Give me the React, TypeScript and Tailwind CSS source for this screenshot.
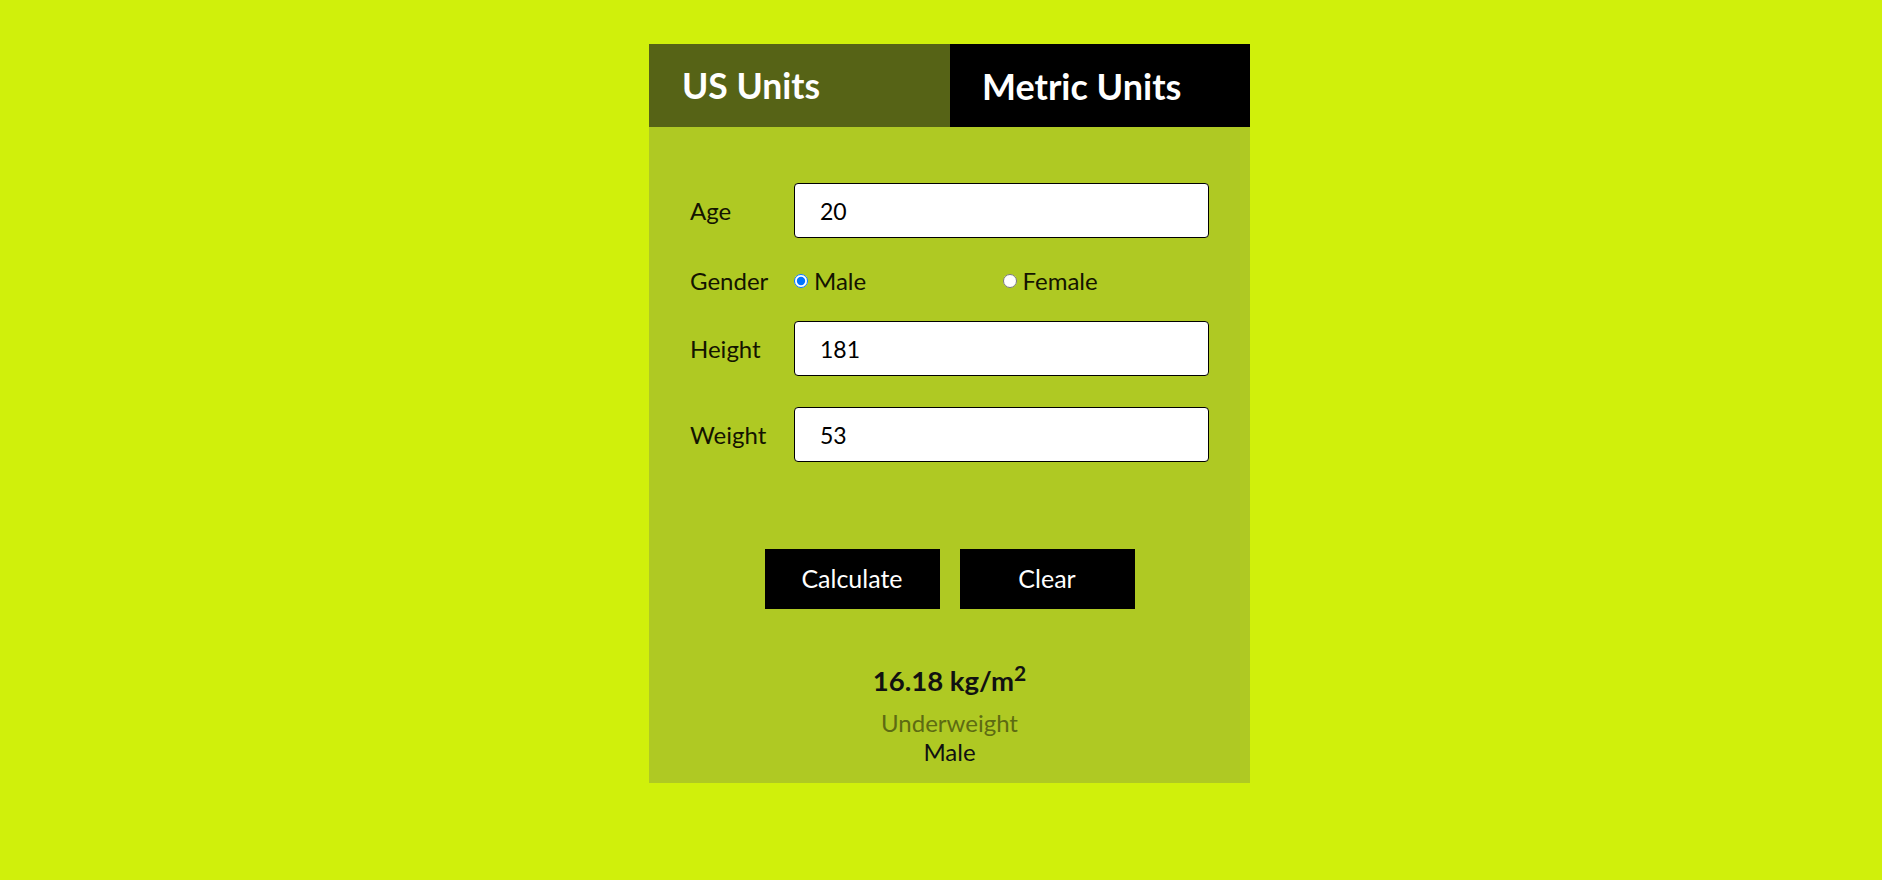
export default function App() {
  const inputCls =
    "h-[55px] w-[415px] rounded-[4px] border border-black bg-white pl-[25px] text-[23px] text-black outline-none";

  return (
    <div className="min-h-screen w-full bg-[#d0f00b] pt-[44px] font-['Lato',sans-serif]">
      <div className="ml-[649px] w-[601px] bg-[#afc923]">
        {/* unit tabs */}
        <div className="flex h-[83px]">
          <div className="flex w-[301px] items-center bg-[#566316] pl-[33px] text-[35.5px] font-bold text-white">
            US Units
          </div>
          <div className="flex flex-1 items-center bg-black pl-[32px] text-[36px] font-bold text-white">
            Metric Units
          </div>
        </div>

        {/* form */}
        <div className="px-[41px] pt-[56px] text-[24px] text-[#141400]">
          <div className="flex items-center">
            <label className="w-[104px]">Age</label>
            <input defaultValue="20" className={inputCls} />
          </div>

          <div className="mt-[28px] flex h-[30px] items-center">
            <span className="w-[104px]">Gender</span>
            <div className="grid w-[415px] grid-cols-2">
              <label className="flex items-center">
                <input type="radio" name="gender" defaultChecked className="m-0 mr-[6px] h-[14px] w-[14px]" />
                Male
              </label>
              <label className="flex items-center">
                <input type="radio" name="gender" className="m-0 ml-[1px] mr-[6px] h-[14px] w-[14px]" />
                Female
              </label>
            </div>
          </div>

          <div className="mt-[25px] flex items-center">
            <label className="w-[104px]">Height</label>
            <input defaultValue="181" className={inputCls} />
          </div>

          <div className="mt-[31px] flex items-center">
            <label className="w-[104px]">Weight</label>
            <input defaultValue="53" className={inputCls} />
          </div>
        </div>

        {/* buttons */}
        <div className="mt-[87px] flex justify-center gap-[20px]">
          <button className="h-[60px] w-[175px] bg-black text-[25px] text-white">Calculate</button>
          <button className="h-[60px] w-[175px] bg-black text-[25px] text-white">Clear</button>
        </div>

        {/* result */}
        <div className="flex flex-col items-center pb-[16px] pt-[56px]">
          <div className="h-[32px] text-[27.5px] font-bold leading-[32px] text-[#111]">
            16.18 kg/m<sup className="text-[21px] leading-none">2</sup>
          </div>
          <div className="mt-[12px] text-[24px] leading-[28px] text-[#5d6b12]">Underweight</div>
          <div className="text-[24px] leading-[30px] text-[#111]">Male</div>
        </div>
      </div>
    </div>
  );
}
